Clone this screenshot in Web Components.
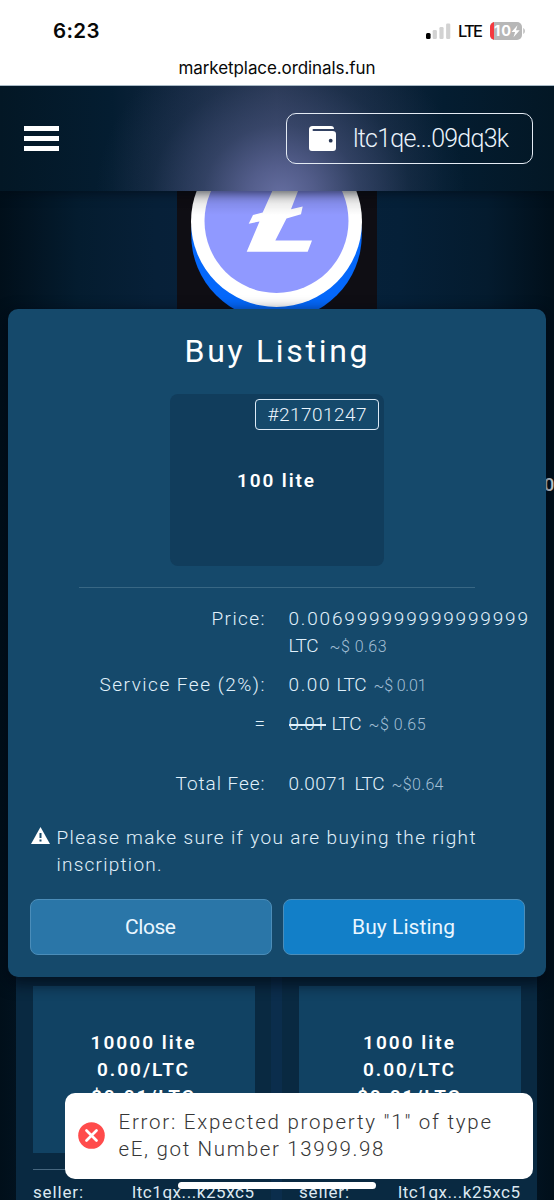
<!DOCTYPE html>
<html lang="en">
<head>
<meta charset="utf-8">
<title>Marketplace</title>
<style>
html,body{margin:0;height:1200px;overflow:hidden;background:#03182a}
body{font-family:Roboto,"Liberation Sans",sans-serif;color:#e8f3fb}
</style>
</head>
<body>
<market-app></market-app>
<script>
const define=(name,css,html)=>customElements.define(name,class extends HTMLElement{
  constructor(){super();this.attachShadow({mode:'open'}).innerHTML=`<style>*{box-sizing:border-box}${css}</style>${html}`}
});

/* A one-line text tracked out to the width given in its "w" attribute. */
customElements.define('tracked-text',class extends HTMLElement{
  constructor(){
    super();
    this.attachShadow({mode:'open'}).innerHTML='<style>:host{display:inline-block;white-space:pre;overflow:visible;text-align:left}span{display:inline-block}:host([strike]) span{background:linear-gradient(currentColor,currentColor) 0 55%/100% 2px no-repeat}</style><span><slot></slot></span>';
  }
  connectedCallback(){
    const w=+this.getAttribute('w'),span=this.shadowRoot.querySelector('span');
    this.style.width=w+'px';
    const natural=span.getBoundingClientRect().width,n=this.textContent.length;
    span.style.letterSpacing=(w-natural)/Math.max(1,n-1)+'px';
    span.style.marginRight='-20px';
  }
});

define('status-bar',`
:host{display:block;position:relative;z-index:2;height:86px;background:#fff;color:#080808;font-family:Inter,sans-serif;border-bottom:1px solid #a9bac6}
.row{display:flex;align-items:center;height:52px;padding:9px 28px 0 53px;justify-content:space-between}
.time{font-size:20.5px;font-weight:600}
.right{display:flex;align-items:center;gap:7px}
.lte{font-size:16.5px;font-weight:500}
.url{text-align:center;font-size:17px;line-height:24px;margin-top:4px}
svg{display:block}
`,`<div class="row"><tracked-text class="time" w="46.5">6:23</tracked-text>
<div class="right"><svg width="25" height="18" viewBox="0 0 25 18"><rect y="11" width="4.6" height="6" rx="1.5" fill="#000"/><g fill="#d2d2d2"><rect x="6.7" y="8" width="4.2" height="9" rx="1.3"/><rect x="13.4" y="5" width="4.2" height="12" rx="1.3"/><rect x="20.1" y="1.5" width="4.2" height="15.5" rx="1.3"/></g></svg>
<tracked-text class="lte" w="25">LTE</tracked-text>
<svg width="36" height="18" viewBox="0 0 36 18"><defs><clipPath id="b"><rect width="32" height="18" rx="5"/></clipPath></defs><g clip-path="url(#b)"><rect width="32" height="18" fill="#b7b7b7"/><rect width="4" height="18" fill="#f5393e"/></g><path d="M33.3 6c2 .7 2 5.300 0 6z" fill="#b7b7b7"/><text x="4" y="14.300" font-family="Inter" font-weight="700" font-size="14.500" textLength="17" fill="#fff">10</text><path d="M27.500 3.300l-6 6.700h3.600l-1.600 5.200 6.200-7h-3.700z" fill="#fff"/></svg></div></div>
<div class="url"><tracked-text w="197">marketplace.ordinals.fun</tracked-text></div>`);

define('wallet-pill',`
:host{display:flex;align-items:center;gap:17px;width:246.500px;height:51px;border:1.500px solid #e4ebf4;border-radius:10px;padding-left:22px;font-size:25px;font-weight:300;color:#eaf3fb}
svg{display:block;flex:none}
`,`<svg width="27" height="25" viewBox="0 0 27 25"><path fill="#fff" d="M3.500 0H22q3 0 3 3H4.500a1 1 0 0 0 0 2H23.500Q27 5 27 8V22q0 3-3 3H3q-3 0-3-3V3.500Q0 0 3.500 0z"/><circle cx="21.700" cy="14.700" r="1.900" fill="#283653"/></svg><slot></slot>`);

define('top-nav',`
:host{display:flex;align-items:center;justify-content:space-between;height:105px;padding:0 21.500px 0 24px;
background:radial-gradient(ellipse 185px 170px at 281px 110px,#656ea0 0%,rgba(92,101,150,.85) 18%,rgba(76,88,130,.52) 42%,rgba(60,76,112,.2) 70%,rgba(40,60,90,0) 100%),linear-gradient(90deg,#031725 0,#041d31 20%,#132740 34%,#24334e 50%,#13273f 64%,#041d31 80%,#031725 100%)}
.menu{display:grid;gap:4.500px;width:35px}.menu i{height:5.500px;background:#fff}
`,`<div class="menu"><i></i><i></i><i></i></div><wallet-pill><tracked-text w="156">ltc1qe...09dq3k</tracked-text></wallet-pill>`);

define('coin-banner',`
:host{display:flex;justify-content:center;height:200px}
svg{display:block}
`,`<svg width="200" height="200" viewBox="177 191 200 200"><defs><linearGradient id="s" x2="0" y2="1"><stop stop-opacity=".16"/><stop offset="1" stop-opacity="0"/></linearGradient></defs><rect x="177" y="191" width="200" height="200" fill="#0f0e14"/>
<circle cx="276.500" cy="235" r="85.300" fill="#0468fb"/><circle cx="276.500" cy="221.500" r="85.500" fill="#fff"/><circle cx="276.500" cy="221" r="72" fill="#9099ff"/>
<path fill="#fff" d="M272.300 191H298L291 209.300 302.700 206.500 301 214.300 286.500 218.500 275.300 240.500H312L307.700 251.800H246.700L259.500 221.500 248.700 223.700 253 215 262.700 212.500z"/><rect x="177" y="191" width="200" height="24" fill="url(#s)"/></svg>`);

define('listing-card',`
:host{display:block;width:255px;height:560px;background:#092941;padding:16px 16px 0 17px;font-weight:600;font-size:19px;line-height:27px}
.top{height:309px}
.art{display:flex;flex-direction:column;align-items:center;height:167px;padding:43px 3px 0 0;background:#114263;color:#fff}
hr{border:0;border-top:1px solid #47677f;margin:16px 0 9px}
.seller{display:flex;justify-content:space-between;font-weight:400;font-size:17px;color:#dce8f1;padding-right:1px}
`,`<div class="top"></div><div class="art"><slot></slot></div><hr><div class="seller"><tracked-text w="50">seller:</tracked-text><tracked-text w="122">ltc1qx...k25xc5</tracked-text></div>`);

define('app-button',`
:host{display:flex;align-items:center;justify-content:center;height:56px;flex:1;border-radius:8px;border:1.500px solid #4b8db9;background:var(--fill,#2a76a8);font-size:21px;color:#e9f6ff}
`,`<slot></slot>`);

define('inscription-preview',`
:host{display:flex;position:relative;width:214px;height:172px;margin:22px auto 0;border-radius:8px;background:#113d5c;justify-content:center;padding:73px 3px 0 0;box-sizing:border-box;font-size:19px;line-height:27px;font-weight:600;color:#fff}
.badge{position:absolute;right:5px;top:5px;width:124px;height:31px;border:1.500px solid #dceaf6;border-radius:4px;background:#15496b;display:flex;justify-content:center;align-items:center;font-size:19px;font-weight:300;color:#eaf5fd}
`,`<div class="badge"><tracked-text w="99">#21701247</tracked-text></div><slot></slot>`);

define('fee-row',`
:host{display:grid;grid-template-columns:235px 1fr;column-gap:24px;line-height:27px;font-size:19px}
.label{text-align:right}
::slotted(div){display:flex;align-items:baseline;height:27px}
`,`<div class="label"><slot name="label"></slot></div><div><slot></slot></div>`);

define('buy-dialog',`
:host{display:block;width:538px;height:668px;border-radius:10px;background:#15496b;padding:22px 21.500px 22px 21.500px;box-shadow:0 5px 14px 3px rgba(0,8,18,.65);color:#e1f1fb}
.title{display:flex;justify-content:center;font-size:32px;line-height:40px;font-weight:400;color:#fff;margin-bottom:23px;padding-right:2px}
inscription-preview{margin-top:0}
hr{border:0;border-top:1.500px solid #386784;width:396px;margin:21px auto 17px}
.fees{display:grid;row-gap:12px;font-weight:300}
.total{margin-top:21px}
.gap{margin-left:7px}
small{display:inline-flex;font-size:16px;color:#a2bfd5;margin-left:7px}
.warn{display:flex;gap:7px;margin:27px 0 20px;font-size:19px;line-height:27px;font-weight:300;padding-left:1px}
.warn svg{flex:none;margin-top:3px}
.lines{display:flex;flex-direction:column}
.buttons{display:flex;gap:11px;margin-top:21px}
`,`<div class="title"><tracked-text w="183">Buy Listing</tracked-text></div>
<inscription-preview><tracked-text w="77">100 lite</tracked-text></inscription-preview><hr>
<div class="fees">
<fee-row><tracked-text slot="label" w="53">Price:</tracked-text><div><tracked-text w="239.5">0.006999999999999999</tracked-text></div><div><tracked-text w="30">LTC</tracked-text><small style="margin-left:11px"><tracked-text w="57">~$ 0.63</tracked-text></small></div></fee-row>
<fee-row><tracked-text slot="label" w="165">Service Fee (2%):</tracked-text><div><tracked-text w="41">0.00</tracked-text><tracked-text class="gap" w="30">LTC</tracked-text><small><tracked-text w="53">~$ 0.01</tracked-text></small></div></fee-row>
<fee-row><tracked-text slot="label" w="10">=</tracked-text><div><tracked-text strike w="37">0.01</tracked-text><tracked-text style="margin-left:6px" w="30">LTC</tracked-text><small><tracked-text w="57">~$ 0.65</tracked-text></small></div></fee-row>
<fee-row class="total"><tracked-text slot="label" w="89">Total Fee:</tracked-text><div><tracked-text w="59">0.0071</tracked-text><tracked-text class="gap" w="30">LTC</tracked-text><small><tracked-text w="52">~$0.64</tracked-text></small></div></fee-row>
</div>
<div class="warn"><svg width="19" height="17" viewBox="0 0 19 17"><path d="M9.500 0L19 17H0z" fill="#fff"/><path d="M8.500 6h2v5h-2zm0 6.500h2v2h-2z" fill="#15496b"/></svg><div class="lines"><tracked-text w="419">Please make sure if you are buying the right</tracked-text><tracked-text w="105">inscription.</tracked-text></div></div>
<div class="buttons"><app-button><tracked-text w="51">Close</tracked-text></app-button><app-button style="--fill:#127fc8"><tracked-text w="103">Buy Listing</tracked-text></app-button></div>`);

define('error-toast',`
:host{display:flex;align-items:center;gap:13.500px;width:468px;height:86px;background:#fff;border-radius:10px;padding-left:13.500px;color:#363636;font-size:20.500px;line-height:27px;font-weight:300}
.text{display:flex;flex-direction:column}
`,`<svg width="27" height="27" viewBox="0 0 27 27"><circle cx="13.500" cy="13.500" r="13.300" fill="#ff4b4b"/><path d="M8.500 8.500l10 10m0-10l-10 10" stroke="#fff" stroke-width="2.700" stroke-linecap="round"/></svg><div class="text"><slot></slot></div>`);

define('market-app',`
:host{display:block;position:relative;width:554px;height:1200px;overflow:hidden;background:linear-gradient(90deg,#010f1a 0,#041c2f 14%,#072038 28%,#07223c 50%,#052038 72%,#041b2e 88%,#010f1a 100%)}
.shade{position:relative;z-index:1;box-shadow:0 2px 10px rgba(0,8,18,.6)}
.edge{display:flex;justify-content:flex-end;height:27px;margin-top:80px;font-size:18px;font-weight:500;line-height:27px}
.edge span{width:10px}
.cards{display:flex;padding-left:16px;gap:11px;margin-top:163px;background:linear-gradient(90deg,transparent 16px,#0b2d4c 16px,#0b2d4c 537px,transparent 537px)}
.modal{position:absolute;left:8px;top:309px;z-index:2}
.toast{position:absolute;left:64.500px;top:1092.500px;z-index:3}
.home{position:absolute;left:178px;top:1182px;width:198px;height:7px;border-radius:4px;background:#fff;z-index:4}
`,`<status-bar></status-bar><top-nav class="shade"></top-nav><coin-banner></coin-banner>
<div class="edge"><span>0</span></div>
<div class="cards"><listing-card><tracked-text w="104">10000 lite</tracked-text><tracked-text w="91">0.00/LTC</tracked-text><tracked-text w="103">$0.01/LTC</tracked-text></listing-card><listing-card><tracked-text w="91">1000 lite</tracked-text><tracked-text w="91">0.00/LTC</tracked-text><tracked-text w="103">$0.01/LTC</tracked-text></listing-card></div>
<buy-dialog class="modal"></buy-dialog>
<error-toast class="toast"><tracked-text w="372.5">Error: Expected property "1" of type</tracked-text><tracked-text w="265">eE, got Number 13999.98</tracked-text></error-toast><div class="home"></div>`);
</script>
</body>
</html>
